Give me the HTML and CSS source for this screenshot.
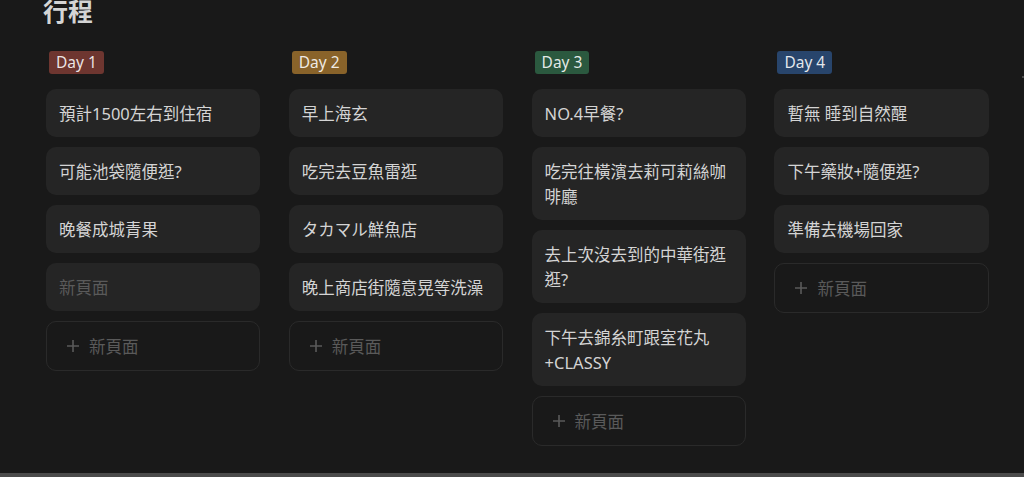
FILE: index.html
```html
<!DOCTYPE html>
<html lang="zh-Hant">
<head>
    <meta charset="UTF-8">
    <meta name="viewport" content="width=device-width, initial-scale=1.0">
    <title>行程</title>
    <link rel="stylesheet" href="styles.css">
</head>
<body>
<div class="page">
    <main class="board-page">
        <h1 class="title">行程</h1>

        <div class="board">
            <section class="column">
                <div class="column-head"><span class="tag tag-red">Day 1</span></div>
                <div class="cards">
                    <div class="card">預計1500左右到住宿</div>
                    <div class="card">可能池袋隨便逛?</div>
                    <div class="card">晚餐成城青果</div>
                    <div class="card card-empty">新頁面</div>
                    <button class="add-card"><svg viewBox="0 0 14 14"><path d="M7 1v12M1 7h12"/></svg>新頁面</button>
                </div>
            </section>

            <section class="column">
                <div class="column-head"><span class="tag tag-yellow">Day 2</span></div>
                <div class="cards">
                    <div class="card">早上海玄</div>
                    <div class="card">吃完去豆魚雷逛</div>
                    <div class="card">タカマル鮮魚店</div>
                    <div class="card">晚上商店街隨意晃等洗澡</div>
                    <button class="add-card"><svg viewBox="0 0 14 14"><path d="M7 1v12M1 7h12"/></svg>新頁面</button>
                </div>
            </section>

            <section class="column">
                <div class="column-head"><span class="tag tag-green">Day 3</span></div>
                <div class="cards">
                    <div class="card">NO.4早餐?</div>
                    <div class="card">吃完往橫濱去莉可莉絲咖啡廳</div>
                    <div class="card">去上次沒去到的中華街逛逛?</div>
                    <div class="card">下午去錦糸町跟室花丸+CLASSY</div>
                    <button class="add-card"><svg viewBox="0 0 14 14"><path d="M7 1v12M1 7h12"/></svg>新頁面</button>
                </div>
            </section>

            <section class="column">
                <div class="column-head"><span class="tag tag-blue">Day 4</span></div>
                <div class="cards">
                    <div class="card">暫無 睡到自然醒</div>
                    <div class="card">下午藥妝+隨便逛?</div>
                    <div class="card">準備去機場回家</div>
                    <button class="add-card"><svg viewBox="0 0 14 14"><path d="M7 1v12M1 7h12"/></svg>新頁面</button>
                </div>
            </section>

            <div class="add-group">
                <svg viewBox="0 0 14 14"><path d="M7 1v12M1 7h12"/></svg>
            </div>
        </div>
    </main>
    <div class="scrollbar"></div>
</div>
</body>
</html>
```

FILE: styles.css
```css
/* Page and board frame */
body {
    margin: 0;
    background-color: #191919;
    color: #d4d4d4;
    font-family: "Noto Sans", "Noto Sans CJK TC", sans-serif;
}
.page {
    height: 100vh;
    display: flex;
    flex-direction: column;
    overflow: hidden;
}
.board-page {
    flex: 1;
    overflow: hidden;
    padding-left: 43px;
}
.title {
    margin: -5px 0 0 0;
    font-size: 25px;
    line-height: 32px;
    font-weight: 600;
    color: #d4d4d4;
}
/* Columns */
.board {
    display: flex;
    gap: 28.5px;
    margin-top: 24px;
    padding-left: 3px;
}
.column {
    flex: 0 0 214.3px;
}
.column-head {
    height: 23px;
    padding-left: 3px;
    margin-bottom: 15px;
    display: flex;
    align-items: center;
}
/* Day tags */
.tag {
    display: inline-block;
    height: 23px;
    line-height: 23px;
    padding: 0 7px;
    border-radius: 3px;
    font-size: 15.5px;
    color: rgba(255, 255, 255, 0.88);
}
.tag-red { background: #6e3630; }
.tag-yellow { background: #89632a; }
.tag-green { background: #2b593f; }
.tag-blue { background: #28456c; }
/* Cards */
.cards {
    display: flex;
    flex-direction: column;
    gap: 10px;
}
.card {
    background: #252525;
    border-radius: 10px;
    padding: 12px 13px 11px;
    font-size: 16.5px;
    line-height: 25px;
    color: #d4d4d4;
}
.card-empty {
    color: #5a5a5a;
}
.add-card {
    display: flex;
    align-items: center;
    gap: 9px;
    height: 50px;
    padding: 0 19px;
    background: none;
    border: 1px solid #2a2a2a;
    border-radius: 10px;
    font-family: inherit;
    font-size: 16.5px;
    color: #5a5a5a;
    text-align: left;
}
.add-card svg,
.add-group svg {
    width: 14px;
    height: 14px;
    stroke: #5a5a5a;
    stroke-width: 1.6;
    fill: none;
}
.add-group {
    flex: 0 0 40px;
    padding: 16px 0 0 4px;
}
/* Horizontal scrollbar strip */
.scrollbar {
    height: 4px;
    background: #4b4b4b;
}
```
